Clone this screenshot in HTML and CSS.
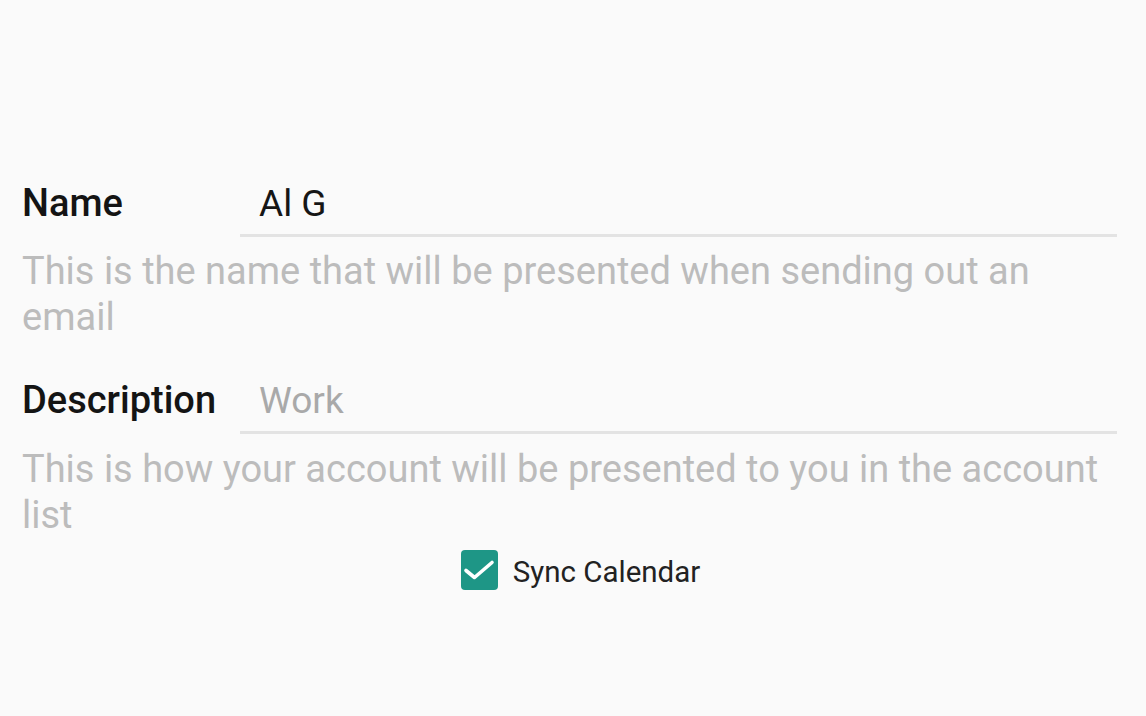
FILE: index.html
```html
<!DOCTYPE html>
<html>
<head>
<meta charset="utf-8">
<link rel="stylesheet" href="styles.css">
</head>
<body>
<div class="form">
  <div class="row">
    <div class="label">Name</div>
    <div class="field"><span class="value">Al G</span></div>
  </div>
  <div class="help">This is the name that will be presented when sending out an email</div>
  <div class="row row2">
    <div class="label">Description</div>
    <div class="field"><span class="value placeholder">Work</span></div>
  </div>
  <div class="help">This is how your account will be presented to you in the account list</div>
  <div class="sync">
    <span class="box"><svg viewBox="0 0 37 40" width="37" height="40"><path d="M5 20.5l8.5 7L31 12.5" fill="none" stroke="#fff" stroke-width="3.6" stroke-linecap="round" stroke-linejoin="round"/></svg></span>
    <span class="sync-label">Sync Calendar</span>
  </div>
</div>
</body>
</html>
```
FILE: styles.css
```css
html, body {
  margin: 0;
  padding: 0;
  background: #fafafa;
  font-family: Roboto, "Noto Sans", sans-serif;
}
.form {
  padding: 179px 29px 0 22px;
}
.row {
  display: flex;
  align-items: baseline;
}
.label {
  width: 218px;
  flex: none;
  font-size: 38px;
  font-weight: 500;
  color: #141414;
  line-height: 48px;
}
.field {
  flex: 1;
  border-bottom: 3px solid #e3e3e3;
  padding: 0 0 6px 19px;
  font-size: 37px;
  color: #161616;
  line-height: 48px;
}
.placeholder {
  color: #a9a9a9;
}
.help {
  font-size: 38px;
  color: #bcbcbc;
  line-height: 46px;
  margin-top: 11px;
  padding-right: 6px;
}
.row2 {
  margin-top: 36px;
}
.row2 + .help {
  margin-top: 12px;
}
.sync {
  display: flex;
  align-items: center;
  justify-content: center;
  gap: 15px;
  margin-top: 12px;
  padding-left: 22px;
}
.box {
  width: 37px;
  height: 40px;
  border-radius: 4px;
  background: #1e9686;
  display: block;
  flex: none;
}
.box svg {
  display: block;
}
.sync-label {
  font-size: 29.5px;
  color: #222;
  padding-top: 4px;
}
```
